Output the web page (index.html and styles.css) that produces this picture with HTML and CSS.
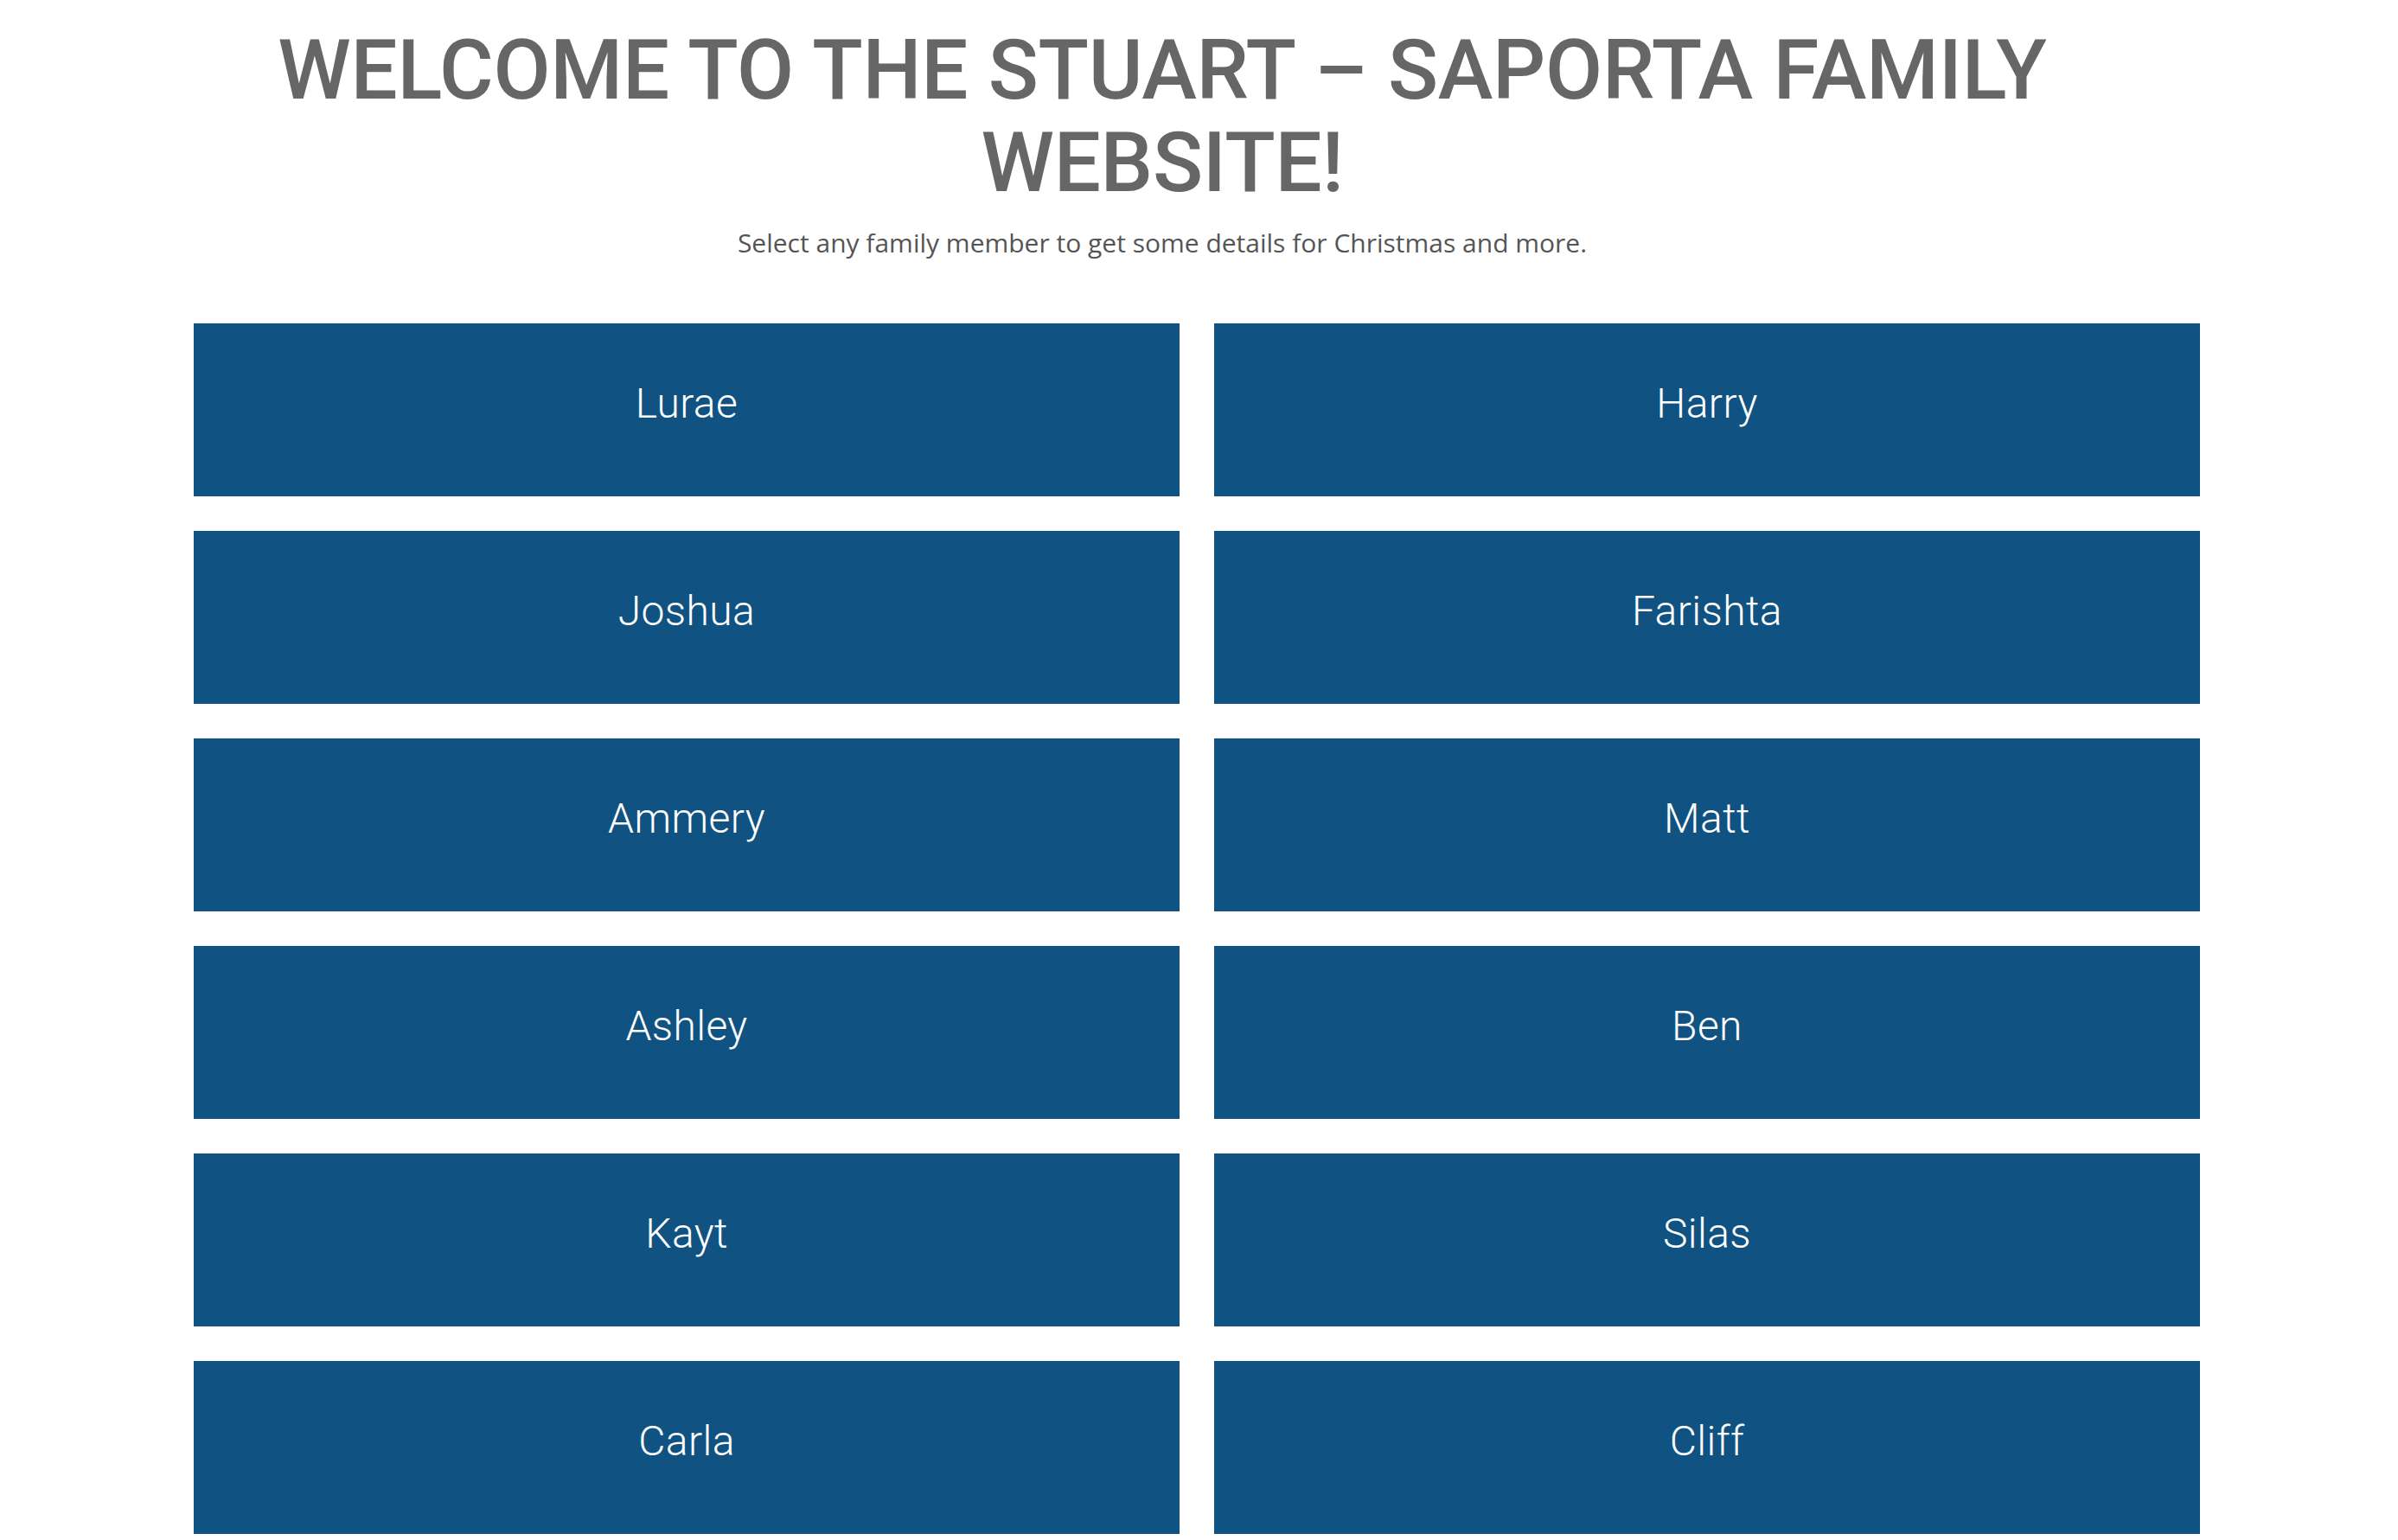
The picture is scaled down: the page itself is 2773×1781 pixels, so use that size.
FILE: index.html
```html
<!DOCTYPE html>
<html lang="en">
<head>
<meta charset="utf-8">
<title>Stuart – Saporta Family</title>
<link rel="stylesheet" href="styles.css">
</head>
<body>
<div class="page">
  <header class="intro">
    <h1 class="title">WELCOME TO THE STUART – SAPORTA FAMILY WEBSITE!</h1>
    <p class="subtitle">Select any family member to get some details for Christmas and more.</p>
  </header>
  <nav class="members">
    <a class="member" href="#">Lurae</a>
    <a class="member" href="#">Harry</a>
    <a class="member" href="#">Joshua</a>
    <a class="member" href="#">Farishta</a>
    <a class="member" href="#">Ammery</a>
    <a class="member" href="#">Matt</a>
    <a class="member" href="#">Ashley</a>
    <a class="member" href="#">Ben</a>
    <a class="member" href="#">Kayt</a>
    <a class="member" href="#">Silas</a>
    <a class="member" href="#">Carla</a>
    <a class="member" href="#">Cliff</a>
  </nav>
</div>
</body>
</html>
```

FILE: styles.css
```css
html, body {
  margin: 0;
  padding: 0;
  background: #ffffff;
}

.page {
  padding: 0 229px 0 224px;
}

.intro {
  padding: 28px 80px 0 0;
  text-align: center;
}

.title {
  margin: 0;
  font-family: Roboto, "Liberation Sans", sans-serif;
  font-weight: 500;
  font-size: 96px;
  line-height: 107px;
  letter-spacing: -0.3px;
  color: #666666;
}

.subtitle {
  margin: 20px 0 0;
  font-family: "Open Sans", Lato, sans-serif;
  font-size: 30px;
  line-height: 38px;
  letter-spacing: 0;
  color: #555555;
}

.members {
  display: grid;
  grid-template-columns: 1140px 1140px;
  column-gap: 40px;
  row-gap: 40px;
  margin-top: 74px;
}

.member {
  display: flex;
  align-items: center;
  justify-content: center;
  height: 200px;
  box-sizing: border-box;
  padding-bottom: 16px;
  background: #105382;
  color: #ffffff;
  text-decoration: none;
  font-family: Roboto, "Liberation Sans", sans-serif;
  font-weight: 300;
  font-size: 48px;
  letter-spacing: 0.4px;
}
```
